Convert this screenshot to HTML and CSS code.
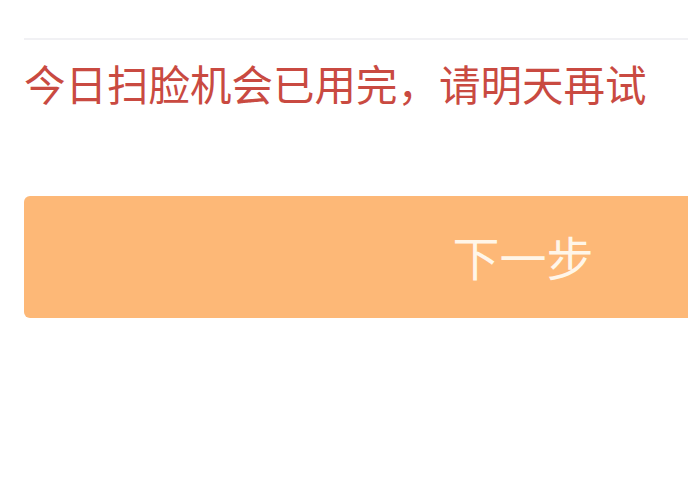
FILE: index.html
```html
<!DOCTYPE html>
<html lang="zh-CN">
<head>
<meta charset="utf-8">
<link rel="stylesheet" href="styles.css">
</head>
<body>
<div class="page">
  <div class="divider"></div>
  <p class="notice">今日扫脸机会已用完，请明天再试</p>
  <button class="next-btn" type="button">下一步</button>
</div>
</body>
</html>
```
FILE: styles.css
```css
html, body {
  margin: 0;
  padding: 0;
  background: #ffffff;
  overflow: hidden;
}
body {
  width: 688px;
  height: 500px;
  font-family: "Noto Sans CJK SC", "Noto Sans", sans-serif;
}
.page {
  padding-left: 24px;
  padding-top: 38px;
  display: flex;
  flex-direction: column;
  align-items: flex-start;
}
.divider {
  width: 1100px;
  height: 2px;
  background: #f1f1f4;
}
.notice {
  margin: 22px 0 0 0;
  font-size: 41.5px;
  line-height: 42px;
  color: #c94a41;
  white-space: nowrap;
}
.next-btn {
  margin-top: 92px;
  width: 998px;
  height: 122px;
  flex-shrink: 0;
  border: none;
  border-radius: 6px;
  background: #fdb877;
  color: #fff6e9;
  font-family: "Noto Sans CJK SC", "Noto Sans", sans-serif;
  font-size: 47px;
  padding: 0 0 4px 0;
  display: flex;
  align-items: center;
  justify-content: center;
}
```
